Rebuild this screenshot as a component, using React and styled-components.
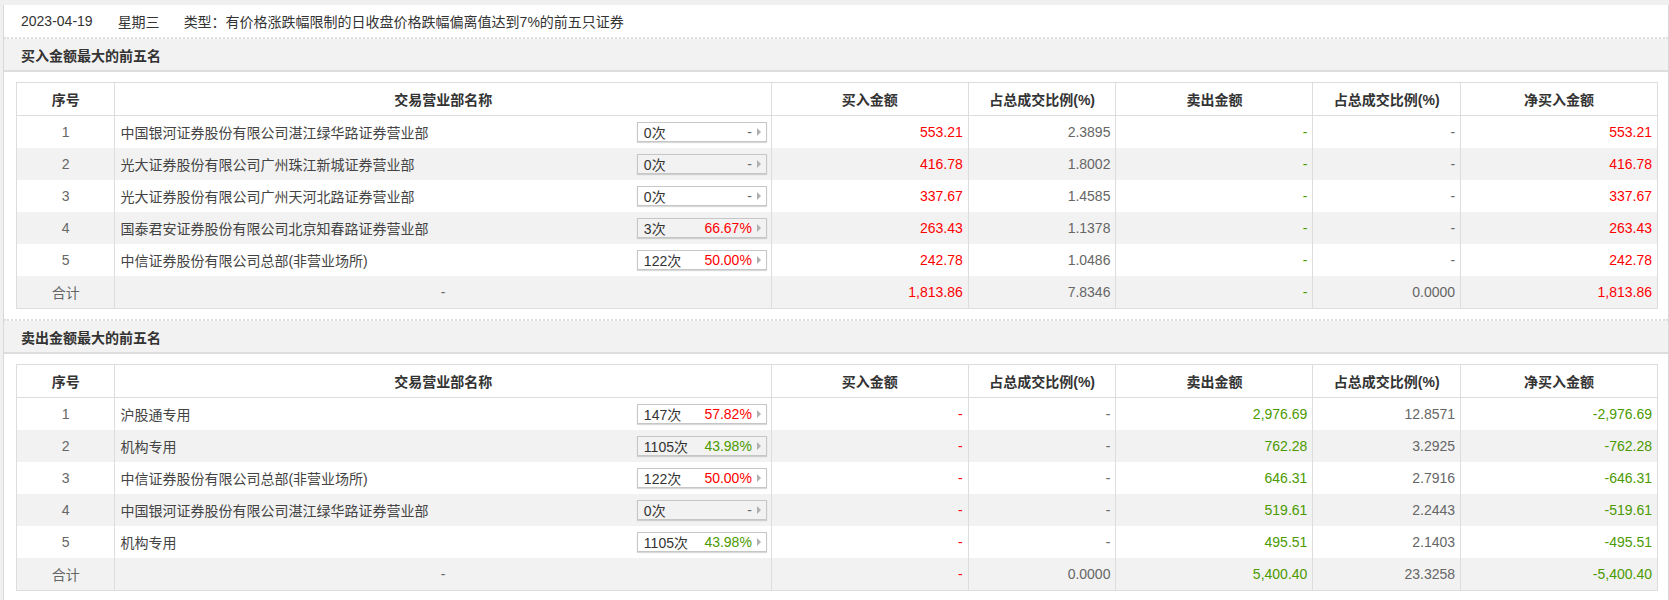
import React from 'react'
import styled, { createGlobalStyle } from 'styled-components'

const RED = '#ff0000'
const GREEN = '#4c9a00'
const GREY = '#666'

const buyRows = [
  { name: '中国银河证券股份有限公司湛江绿华路证券营业部', times: '0次', rate: null, buy: '553.21', buyPct: '2.3895', sell: '-', sellPct: '-', net: '553.21' },
  { name: '光大证券股份有限公司广州珠江新城证券营业部', times: '0次', rate: null, buy: '416.78', buyPct: '1.8002', sell: '-', sellPct: '-', net: '416.78' },
  { name: '光大证券股份有限公司广州天河北路证券营业部', times: '0次', rate: null, buy: '337.67', buyPct: '1.4585', sell: '-', sellPct: '-', net: '337.67' },
  { name: '国泰君安证券股份有限公司北京知春路证券营业部', times: '3次', rate: '66.67%', up: true, buy: '263.43', buyPct: '1.1378', sell: '-', sellPct: '-', net: '263.43' },
  { name: '中信证券股份有限公司总部(非营业场所)', times: '122次', rate: '50.00%', up: true, buy: '242.78', buyPct: '1.0486', sell: '-', sellPct: '-', net: '242.78' },
]

const sellRows = [
  { name: '沪股通专用', times: '147次', rate: '57.82%', up: true, buy: '-', buyPct: '-', sell: '2,976.69', sellPct: '12.8571', net: '-2,976.69' },
  { name: '机构专用', times: '1105次', rate: '43.98%', up: false, buy: '-', buyPct: '-', sell: '762.28', sellPct: '3.2925', net: '-762.28' },
  { name: '中信证券股份有限公司总部(非营业场所)', times: '122次', rate: '50.00%', up: true, buy: '-', buyPct: '-', sell: '646.31', sellPct: '2.7916', net: '-646.31' },
  { name: '中国银河证券股份有限公司湛江绿华路证券营业部', times: '0次', rate: null, buy: '-', buyPct: '-', sell: '519.61', sellPct: '2.2443', net: '-519.61' },
  { name: '机构专用', times: '1105次', rate: '43.98%', up: false, buy: '-', buyPct: '-', sell: '495.51', sellPct: '2.1403', net: '-495.51' },
]

const GlobalStyle = createGlobalStyle`
  body {
    margin: 0;
    background: #f0f0f0;
    font-family: "Liberation Sans", Arial, "Noto Sans CJK SC", sans-serif;
    font-size: 14px;
    color: #333;
  }
`

const Panel = styled.div`
  margin: 5px 0 0 3px;
  background: #fff;
  border-left: 1px solid #d8d8d8;
  border-right: 1px solid #d8d8d8;
`

const InfoBar = styled.div`
  display: flex;
  align-items: center;
  height: 32px;
  padding-left: 17px;
  color: #333;
`

const InfoItem = styled.span`
  margin-right: ${p => p.gap || 0}px;
`

const Section = styled.div`
  border-top: 2px dotted #ddd;
  padding-bottom: 10px;
`

const SectionTitle = styled.div`
  display: flex;
  align-items: center;
  height: 31px;
  padding-left: 17px;
  background: #f2f2f2;
  border-bottom: 2px solid #ddd;
  font-weight: bold;
  color: #333;
`

const TableWrap = styled.div`
  padding: 10px 0 0 12px;
`

const Table = styled.table`
  width: 1642px;
  border-collapse: collapse;
  table-layout: fixed;
  border: 1px solid #ddd;
`

const Th = styled.th`
  height: 32px;
  padding: 0;
  font-weight: bold;
  color: #333;
  text-align: center;
  background: #fff;
  border-left: 1px solid #ddd;
  border-bottom: 1px solid #ddd;
`

const Tr = styled.tr`
  background: ${p => (p.striped ? '#f2f2f2' : '#fff')};
`

const Td = styled.td`
  height: 32px;
  padding: 0 5px;
  border-left: 1px solid #ddd;
  text-align: ${p => p.align || 'right'};
  color: ${p => p.color || GREY};
  white-space: nowrap;
`

const NameCell = styled.div`
  display: flex;
  align-items: center;
  justify-content: space-between;
  color: #444;
  margin-right: -1px;
`

const Times = styled.span`
  display: flex;
  align-items: center;
  box-sizing: border-box;
  width: 130px;
  height: 20px;
  padding: 0 5px 0 6px;
  border: 1px solid #c6c6c6;
  box-shadow: 0 1px 1px rgba(0, 0, 0, 0.15);
  color: #333;
`

const Count = styled.span`
  flex: 1;
`

const Rate = styled.span`
  color: ${p => p.color};
  margin-right: 5px;
`

const Arrow = styled.span`
  width: 0;
  height: 0;
  border-top: 4px solid transparent;
  border-bottom: 4px solid transparent;
  border-left: 4px solid #b0b0b0;
`

function TimesBox({ times, rate, up }) {
  return (
    <Times>
      <Count>{times}</Count>
      <Rate color={rate ? (up ? RED : GREEN) : GREY}>{rate || '-'}</Rate>
      <Arrow />
    </Times>
  )
}

function Cols() {
  return (
    <colgroup>
      <col style={{ width: '6%' }} />
      <col style={{ width: '40%' }} />
      <col style={{ width: '12%' }} />
      <col style={{ width: '9%' }} />
      <col style={{ width: '12%' }} />
      <col style={{ width: '9%' }} />
      <col style={{ width: '12%' }} />
    </colgroup>
  )
}

function RankTable({ rows, total, side }) {
  const netColor = side === 'buy' ? RED : GREEN
  return (
    <Table>
      <Cols />
      <thead>
        <tr>
          <Th>序号</Th>
          <Th>交易营业部名称</Th>
          <Th>买入金额</Th>
          <Th>占总成交比例(%)</Th>
          <Th>卖出金额</Th>
          <Th>占总成交比例(%)</Th>
          <Th>净买入金额</Th>
        </tr>
      </thead>
      <tbody>
        {rows.map((r, i) => (
          <Tr key={i} striped={i % 2 === 1}>
            <Td align="center">{i + 1}</Td>
            <Td align="left">
              <NameCell>
                <span>{r.name}</span>
                <TimesBox times={r.times} rate={r.rate} up={r.up} />
              </NameCell>
            </Td>
            <Td color={RED}>{r.buy}</Td>
            <Td>{r.buyPct}</Td>
            <Td color={GREEN}>{r.sell}</Td>
            <Td>{r.sellPct}</Td>
            <Td color={netColor}>{r.net}</Td>
          </Tr>
        ))}
        <Tr striped>
          <Td align="center">合计</Td>
          <Td align="center">-</Td>
          <Td color={RED}>{total.buy}</Td>
          <Td>{total.buyPct}</Td>
          <Td color={GREEN}>{total.sell}</Td>
          <Td>{total.sellPct}</Td>
          <Td color={netColor}>{total.net}</Td>
        </Tr>
      </tbody>
    </Table>
  )
}

export default function App() {
  return (
    <>
      <GlobalStyle />
      <Panel>
        <InfoBar>
          <InfoItem gap={25}>2023-04-19</InfoItem>
          <InfoItem gap={24}>星期三</InfoItem>
          <InfoItem>类型：有价格涨跌幅限制的日收盘价格跌幅偏离值达到7%的前五只证券</InfoItem>
        </InfoBar>
        <Section>
          <SectionTitle>买入金额最大的前五名</SectionTitle>
          <TableWrap>
            <RankTable
              side="buy"
              rows={buyRows}
              total={{ buy: '1,813.86', buyPct: '7.8346', sell: '-', sellPct: '0.0000', net: '1,813.86' }}
            />
          </TableWrap>
        </Section>
        <Section>
          <SectionTitle>卖出金额最大的前五名</SectionTitle>
          <TableWrap>
            <RankTable
              side="sell"
              rows={sellRows}
              total={{ buy: '-', buyPct: '0.0000', sell: '5,400.40', sellPct: '23.3258', net: '-5,400.40' }}
            />
          </TableWrap>
        </Section>
        <Section />
      </Panel>
    </>
  )
}
